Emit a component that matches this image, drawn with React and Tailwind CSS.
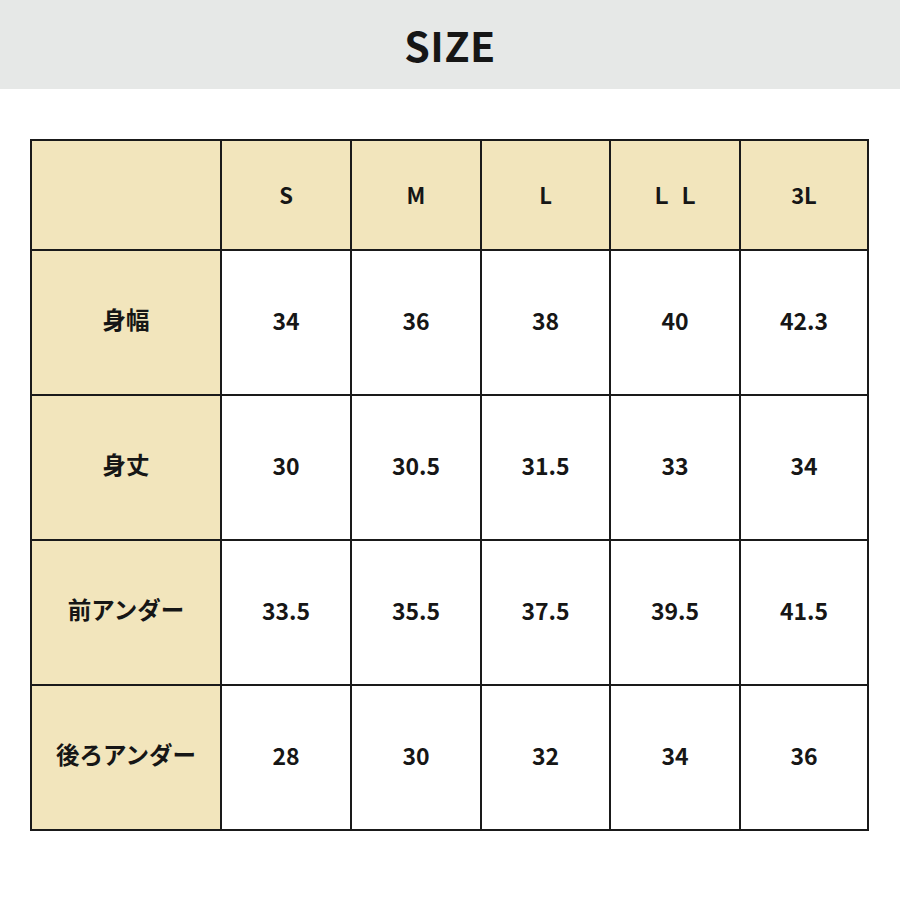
export default function App() {
  const cols = ["S", "M", "L", "Ｌ Ｌ", "3L"];
  const rows = [
    ["身幅", ["34", "36", "38", "40", "42.3"]],
    ["身丈", ["30", "30.5", "31.5", "33", "34"]],
    ["前アンダー", ["33.5", "35.5", "37.5", "39.5", "41.5"]],
    ["後ろアンダー", ["28", "30", "32", "34", "36"]],
  ];
  const font = { fontFamily: '"Noto Sans CJK JP", "Noto Sans", sans-serif' };
  return (
    <div className="w-[900px] h-[900px] bg-white text-[#161616]" style={font}>
      <div className="h-[89px] bg-[#e6e8e7] flex items-center justify-center">
        <span className="text-[41px] font-bold tracking-[0.5px] leading-none">SIZE</span>
      </div>
      <div className="mt-[50px] ml-[30px] w-fit grid grid-cols-[188px_128px_128px_127px_128px_126px] grid-rows-[108px_repeat(4,143px)] gap-[2px] p-[2px] bg-[#1a1a1a]">
        <div className="bg-[#f2e5bc]" />
        {cols.map((c) => (
          <div key={c} className="bg-[#f2e5bc] flex items-center justify-center text-[22px] font-bold leading-none pb-[2px]">
            {c}
          </div>
        ))}
        {rows.map(([label, vals]) => (
          <>
            <div key={label} className="bg-[#f2e5bc] flex items-center justify-center text-[23.5px] font-bold leading-none pb-[5px]">
              {label}
            </div>
            {vals.map((v, i) => (
              <div key={label + i} className="bg-white flex items-center justify-center text-[23px] font-bold leading-none pb-[5px]">
                {v}
              </div>
            ))}
          </>
        ))}
      </div>
    </div>
  );
}
